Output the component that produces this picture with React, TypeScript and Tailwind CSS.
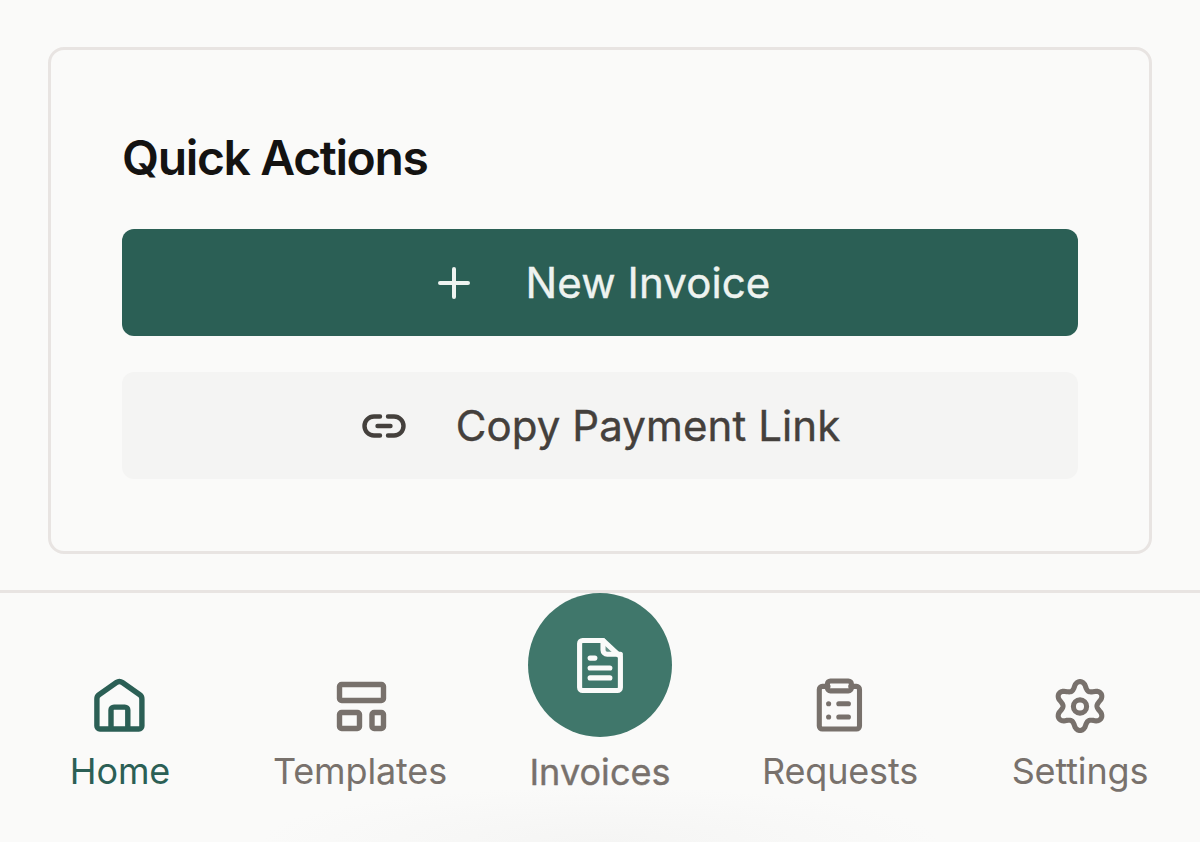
const font = { fontFamily: "Inter, sans-serif" };

const gearPath = (() => {
  const pts: string[] = [];
  const n = 144;
  for (let i = 0; i < n; i++) {
    const t = (i / n) * Math.PI * 2;
    const c = Math.cos(6 * t);
    const r = 6.9 + 1.25 * (Math.sign(c) * Math.pow(Math.abs(c), 0.8));
    const x = 12 + r * Math.sin(t);
    const y = 11.35 - r * Math.cos(t);
    pts.push(`${x.toFixed(2)} ${y.toFixed(2)}`);
  }
  return `M${pts.join("L")}Z`;
})();

function HomeIcon() {
  return (
    <svg viewBox="0 0 24 24" fill="none" stroke="currentColor" strokeWidth="1.8" strokeLinecap="round" strokeLinejoin="round" className="h-[72px] w-[72px]">
      <path d="M5 7.600 10.800 3.500a1.700 1.700 0 0 1 2 0l5.800 4.100a1.700 1.700 0 0 1 .7 1.400v9a1 1 0 0 1-1 1H5.300a1 1 0 0 1-1-1V9a1.700 1.700 0 0 1 .7-1.400Z" />
      <path d="M9 18.800v-6.100a1 1 0 0 1 1-1h3.600a1 1 0 0 1 1 1v6.100" />
    </svg>
  );
}
function TemplatesIcon() {
  return (
    <svg viewBox="0 0 24 24" fill="none" stroke="currentColor" strokeWidth="1.800" strokeLinejoin="round" className="h-[72px] w-[72px]">
      <rect x="5.170" y="4.170" width="14.660" height="5.330" rx="0.700" />
      <rect x="5.170" y="13.500" width="6.660" height="5.330" rx="0.700" />
      <rect x="16" y="13.500" width="3.830" height="5.330" rx="0.700" />
    </svg>
  );
}
function DocIcon() {
  return (
    <svg viewBox="0 0 24 24" fill="none" stroke="currentColor" strokeWidth="1.700" strokeLinecap="round" strokeLinejoin="round" className="h-[72px] w-[72px]">
      <path d="M13 8.400V3.830l5.830 4.570Z" fill="currentColor" fillOpacity="0.2" stroke="none" />
      <path d="M13 3.830H6.200a1 1 0 0 0-1 1V19.500a1 1 0 0 0 1 1h11.600a1 1 0 0 0 1-1V9.200Z" />
      <path d="M13 3.830V7a1.400 1.400 0 0 0 1.400 1.400h4.400" />
      <path d="M8.700 9.700h1.600M8.700 13h6.600M8.700 16.300h6.600" />
    </svg>
  );
}
function ClipboardIcon() {
  return (
    <svg viewBox="0 0 24 24" fill="none" stroke="currentColor" strokeWidth="1.700" strokeLinecap="round" strokeLinejoin="round" className="h-[72px] w-[72px]">
      <path d="M8 4.800H6.100a1 1 0 0 0-1 1V18a1 1 0 0 0 1 1h11.400a1 1 0 0 0 1-1V5.800a1 1 0 0 0-1-1H15.600" />
      <rect x="7.800" y="3" width="8" height="3.300" rx="1" />
      <path d="M11.600 10.600h3.200M11.600 15h3.200M8.200 10.600h.01M8.200 15h.01" />
    </svg>
  );
}
function GearIcon() {
  return (
    <svg viewBox="0 0 24 24" fill="none" stroke="currentColor" strokeWidth="1.700" strokeLinejoin="round" className="h-[72px] w-[72px]">
      <path d={gearPath} />
      <circle cx="12" cy="11.500" r="2.200" />
    </svg>
  );
}
function LinkIcon() {
  return (
    <svg viewBox="0 0 24 24" fill="none" stroke="currentColor" strokeWidth="2.200" strokeLinecap="round" className="h-[48px] w-[48px]">
      <path d="M10 7.250H7a4.750 4.750 0 0 0 0 9.500h3" />
      <path d="M14 7.250h3a4.750 4.750 0 0 1 0 9.500h-3" />
      <path d="M8.750 12h6.500" />
    </svg>
  );
}
function PlusIcon() {
  return (
    <svg viewBox="0 0 24 24" fill="none" stroke="currentColor" strokeWidth="2" strokeLinecap="round" className="h-[48px] w-[48px]">
      <path d="M12 5v14M5 12h14" />
    </svg>
  );
}

function NavItem({ icon, label, active }: { icon: React.ReactNode; label: string; active?: boolean }) {
  return (
    <div className={`flex w-[240px] flex-col items-center pt-[79px] ${active ? "text-[#2b5f55]" : "text-[#78716c]"}`}>
      {icon}
      <span className="mt-[3px] text-[36px] leading-[48px] tracking-[-0.15px]">{label}</span>
    </div>
  );
}

export default function App() {
  return (
    <div style={font} className="h-[842px] w-[1200px] overflow-hidden bg-[#fafaf9]">
      <div className="px-[48px] pt-[47px]">
        <div className="h-[507px] rounded-[16px] border-[3px] border-[#e8e4e2] px-[71px] pt-[72px]">
          <h2 className="text-[48px] leading-[72px] font-semibold tracking-[-1.350px] text-[#141312]">Quick Actions</h2>
          <button className="mt-[35px] flex h-[107px] w-full items-center justify-center gap-[48px] rounded-[12px] bg-[#2b5f55] text-[42px] font-normal tracking-[0.1px] text-[#eef3f0] [-webkit-text-stroke:0.4px]">
            <PlusIcon />
            <span>New Invoice</span>
          </button>
          <button className="mt-[36px] flex h-[107px] w-full items-center justify-center gap-[48px] rounded-[12px] bg-[#f4f4f3] text-[42px] font-normal tracking-[0.1px] text-[#44403c] [-webkit-text-stroke:0.4px]">
            <LinkIcon />
            <span>Copy Payment Link</span>
          </button>
        </div>
      </div>
      <nav className="mt-[36px] flex h-[252px] border-t-[3px] border-[#e8e4e2] bg-[radial-gradient(ellipse_340px_55px_at_50%_100%,#f5f5f4,transparent)]">
        <NavItem active icon={<HomeIcon />} label="Home" />
        <NavItem icon={<TemplatesIcon />} label="Templates" />
        <div className="flex w-[240px] flex-col items-center text-[#78716c]">
          <div className="flex h-[144px] w-[144px] items-center justify-center rounded-full bg-[#40776b] text-[#fafaf9]">
            <DocIcon />
          </div>
          <span className="mt-[11px] text-[36px] leading-[48px] font-normal tracking-[0.05px] [-webkit-text-stroke:0.4px]">Invoices</span>
        </div>
        <NavItem icon={<ClipboardIcon />} label="Requests" />
        <NavItem icon={<GearIcon />} label="Settings" />
      </nav>
    </div>
  );
}
